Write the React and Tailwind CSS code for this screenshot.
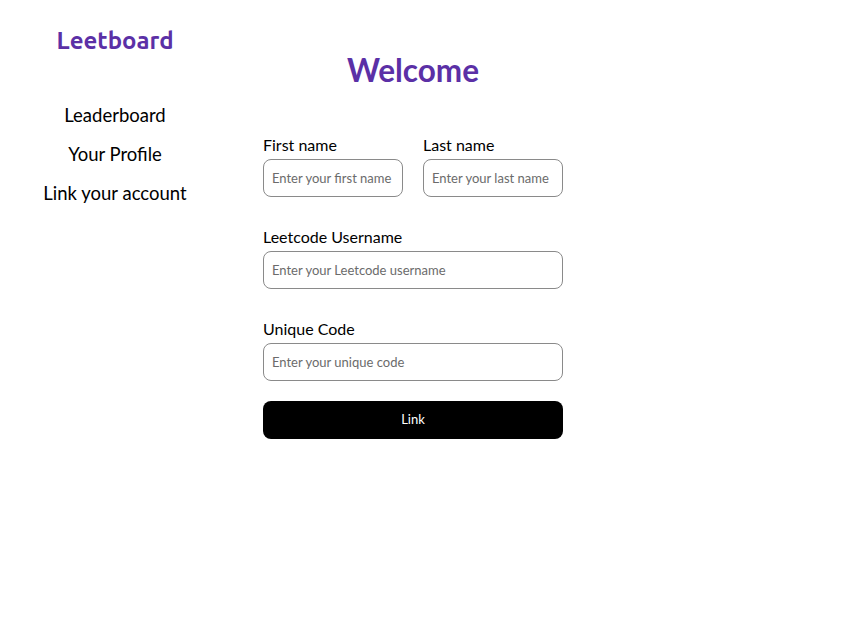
import React from 'react';

const Field = ({ label, placeholder, className = '' }) => (
  <div className={`flex flex-col ${className}`}>
    <label className="text-[16px] leading-[24px] text-black">{label}</label>
    <input
      placeholder={placeholder}
      className="mt-[2px] h-[38px] w-full rounded-[8px] border border-[#8a8a8a] px-[8px] text-[13px] text-black placeholder:text-[#6b6b6b] outline-none"
    />
  </div>
);

export default function App() {
  return (
    <div className="flex min-h-screen bg-white font-['Lato','Noto_Sans',sans-serif]">
      {/* Sidebar */}
      <aside className="flex w-[230px] flex-col items-center pt-[25px]">
        <h1 className="font-['Ubuntu','Open_Sans',sans-serif] text-[24px] font-bold leading-[32px] text-[#5b30a6]">Leetboard</h1>
        <nav className="mt-[46px] flex flex-col items-center gap-[15px] text-[18.5px] leading-[24px] text-black">
          <a href="#">Leaderboard</a>
          <a href="#">Your Profile</a>
          <a href="#">Link your account</a>
        </nav>
      </aside>

      {/* Main */}
      <main className="flex-1 pl-[33px] pt-[50px]">
        <div className="flex w-[300px] flex-col">
          <h2 className="text-center text-[31.5px] font-bold leading-[40px] text-[#5b30a6]">Welcome</h2>
          <div className="mt-[43px] flex gap-[20px]">
            <Field label="First name" placeholder="Enter your first name" className="w-[140px]" />
            <Field label="Last name" placeholder="Enter your last name" className="w-[140px]" />
          </div>
          <Field label="Leetcode Username" placeholder="Enter your Leetcode username" className="mt-[28px]" />
          <Field label="Unique Code" placeholder="Enter your unique code" className="mt-[28px]" />
          <button className="mt-[20px] h-[38px] w-full rounded-[8px] bg-black text-[13px] text-white">Link</button>
        </div>
      </main>
    </div>
  );
}
